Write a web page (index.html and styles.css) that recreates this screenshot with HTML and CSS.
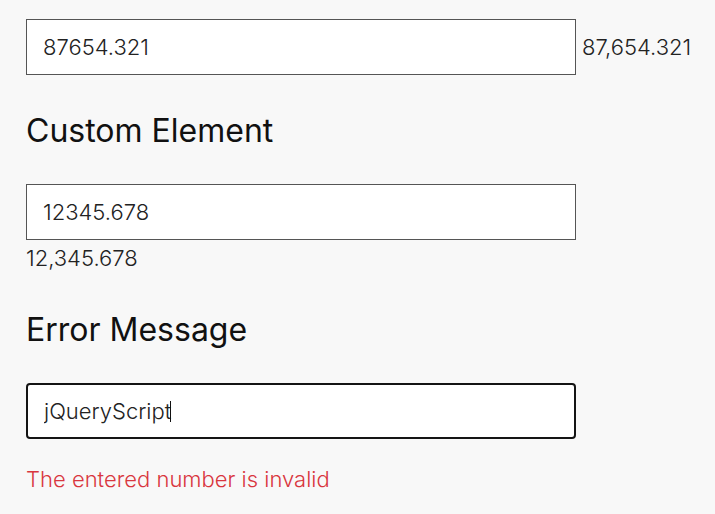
FILE: index.html
```html
<!DOCTYPE html>
<html lang="en">
<head>
  <meta charset="UTF-8">
  <meta name="viewport" content="width=device-width, initial-scale=1.0">
  <title>Number Format Demo</title>
  <link rel="stylesheet" href="styles.css">
</head>
<body>
  <div class="container">
    <div class="demo demo-inline">
      <input type="text" class="num-input" value="87654.321">
      <span class="num-output">87,654.321</span>
    </div>

    <h2 class="demo-title">Custom Element</h2>
    <div class="demo demo-block">
      <input type="text" class="num-input" value="12345.678">
      <div class="num-output num-output-block">12,345.678</div>
    </div>

    <h2 class="demo-title">Error Message</h2>
    <div class="demo">
      <span class="input-wrap">
        <input type="text" class="num-input is-focused" value="jQueryScript">
        <span class="caret"></span>
      </span>
      <div class="error-msg">The entered number is invalid</div>
    </div>
  </div>
</body>
</html>
```

FILE: styles.css
```css
html, body {
  margin: 0;
  background-color: #f8f8f8;
}
body {
  font-family: Inter, "Noto Sans", sans-serif;
  font-weight: 300;
  font-size: 22px;
  color: #222;
}
.container {
  padding: 19px 26px;
}
.demo-inline {
  display: flex;
  align-items: baseline;
  gap: 6px;
}
.num-input {
  display: block;
  flex-shrink: 0;
  width: 550px;
  height: 56px;
  box-sizing: border-box;
  padding: 0 16px;
  border: 1px solid #555;
  border-radius: 0;
  background: #fff;
  font-family: inherit;
  font-weight: 300;
  font-size: 22px;
  color: #222;
}
.num-input:focus {
  outline: none;
}
.is-focused {
  border: 2px solid #141414;
  border-radius: 4px;
}
.input-wrap {
  display: block;
  position: relative;
  width: 550px;
}
.caret {
  position: absolute;
  left: 144px;
  top: 18px;
  width: 1px;
  height: 21px;
  background: #111;
}
.demo-block {
  padding-bottom: 4px;
}
.num-output-block {
  margin-top: 6px;
  line-height: 24px;
}
.demo-title {
  margin: 36px 0 34px;
  font-size: 32px;
  font-weight: 400;
  line-height: 39px;
  color: #111;
}
.error-msg {
  margin-top: 28px;
  color: #d9363e;
  line-height: 24px;
}
```
